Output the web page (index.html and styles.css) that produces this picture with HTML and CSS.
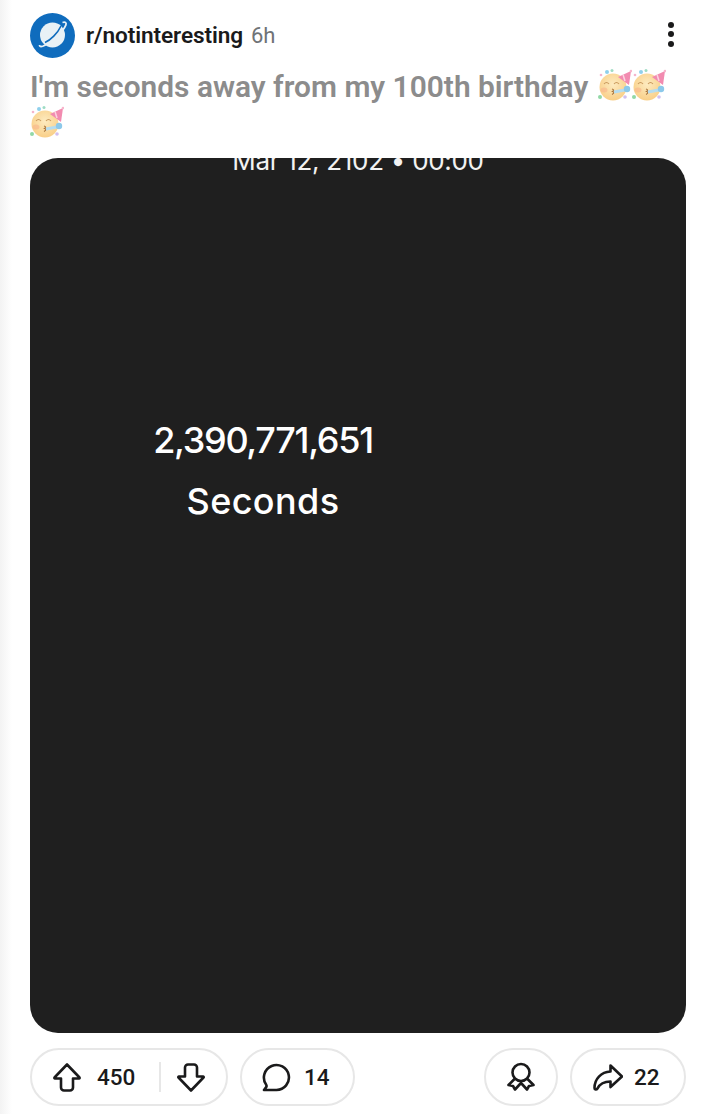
FILE: index.html
```html
<!DOCTYPE html>
<html lang="en">
<head>
<meta charset="utf-8">
<title>r/notinteresting</title>
<link rel="stylesheet" href="styles.css">
</head>
<body>
<svg class="defs" width="0" height="0" aria-hidden="true">
  <defs>
    <radialGradient id="face" cx="50%" cy="40%" r="60%">
      <stop offset="0" stop-color="#fdebc0"/>
      <stop offset="1" stop-color="#f9cf88"/>
    </radialGradient>
    <symbol id="party" viewBox="0 0 34 34">
      <circle cx="15" cy="19" r="13.5" fill="url(#face)"/>
      <path d="M20 9 33 3 31 17Z" fill="#f28bb0"/>
      <path d="M25 6.5 27 13" stroke="#fbd3e0" stroke-width="1.5" fill="none"/>
      <circle cx="33" cy="3" r="1.3" fill="#f7b6cc"/>
      <path d="M6 16q2.500-3 5 0M16 16q2.500-3 5 0" stroke="#c99a5e" stroke-width="1.1" fill="none"/>
      <ellipse cx="6" cy="22" rx="3.500" ry="2.500" fill="#f8b48c" opacity=".6"/>
      <path d="M14 21q3 1 .5 2.500q3 1 -.5 3" stroke="#a8743c" stroke-width="1.2" fill="none"/>
      <path d="M16 24 27 22" stroke="#b5dcef" stroke-width="3"/>
      <circle cx="29" cy="21" r="3.200" fill="#8cc9ea"/>
      <circle cx="9" cy="4" r="2" fill="#8fd0ec"/>
      <circle cx="14" cy="2.500" r="1.500" fill="#9edcc4"/>
      <circle cx="3" cy="7" r="1.300" fill="#f4b5cc"/>
      <circle cx="2" cy="29" r="2" fill="#92d8a6"/>
      <circle cx="27" cy="29" r="1.800" fill="#d0bff0"/>
    </symbol>
  </defs>
</svg>

<main class="post">
  <header class="post-head">
    <div class="avatar">
      <svg viewBox="0 0 45 45" width="45" height="45" aria-hidden="true">
        <circle cx="22.500" cy="22.500" r="22.500" fill="#0f6cbd"/>
        <circle cx="22.500" cy="22" r="12.500" fill="#e8f1f6"/>
        <path d="M32.500 9.500c3-.8 4.300.3 3.300 2.700-2.500 6-12.500 16.500-22.500 20.800-2.700 1-3.800.6-3.800-1" fill="none" stroke="#e8f1f6" stroke-width="1.800"/>
        <path d="M15 29.500c5.500-2.500 12.500-9 16-16.500" fill="none" stroke="#0f6cbd" stroke-width="1.600"/>
      </svg>
    </div>
    <div class="meta">
      <span class="sub">r/notinteresting</span>
      <span class="age">6h</span>
    </div>
    <div class="kebab" aria-label="More"><i></i><i></i><i></i></div>
  </header>

  <h1 class="title">
    <span class="title-text">I'm seconds away from my 100th birthday</span>
    <svg class="emoji" aria-hidden="true"><use href="#party"/></svg><svg class="emoji" aria-hidden="true"><use href="#party"/></svg>
    <svg class="emoji" aria-hidden="true"><use href="#party"/></svg>
  </h1>

  <section class="media">
    <div class="date">Mar 12, 2102 • 00:00</div>
    <div class="count">
      <div class="count-num">2,390,771,651</div>
      <div class="count-unit">Seconds</div>
    </div>
  </section>

  <footer class="actions">
    <div class="pill vote">
      <svg class="icon" viewBox="0 0 30 30" aria-hidden="true"><path d="M15 2.500 2.500 15.500a.6.6 0 0 0 .5 1H9V25.500a3 3 0 0 0 3 3h6a3 3 0 0 0 3-3v-9h6a.6.6 0 0 0 .5-1z"/></svg>
      <span class="num up-num">450</span>
      <span class="sep"></span>
      <svg class="icon down" viewBox="0 0 30 30" aria-hidden="true"><path d="M15 28.500 27.500 15.500a.6.6 0 0 0-.5-1H21V5.500a3 3 0 0 0-3-3h-6a3 3 0 0 0-3 3v9H3a.6.6 0 0 0-.5 1z"/></svg>
    </div>
    <div class="pill comments">
      <svg class="icon" viewBox="0 0 30 30" aria-hidden="true"><path d="M3 28h12.500a12.500 12.500 0 1 0-10.500-5.600c.8 1.200.8 2 0 3z"/></svg>
      <span class="num">14</span>
    </div>
    <div class="pill award">
      <svg class="icon" viewBox="0 0 30 30" aria-hidden="true"><circle cx="15" cy="10.500" r="8.500"/><path d="M8.500 17 2.500 23l4.500 1 2 3.500 6-6.500 6 6.500 2-3.500 4.500-1-6-6"/></svg>
    </div>
    <div class="pill share">
      <svg class="icon" viewBox="0 0 30 30" aria-hidden="true"><path d="M17.500 3.500 29 14.500 17.500 25V19.500c-6 0-10.500 2-13 7-1 1.500-3 1.500-3-.5C1.500 17 8 10 17.500 9.500z"/></svg>
      <span class="num">22</span>
    </div>
  </footer>
</main>
</body>
</html>
```

FILE: styles.css
```css
* { box-sizing: border-box; }

html, body { margin: 0; height: 100%; }

body {
  background: linear-gradient(to right, #f3f3f3 0, #fbfbfb 8px, #fff 12px);
  font-family: Roboto, "Liberation Sans", sans-serif;
  color: #1a1a1b;
  overflow: hidden;
}

.defs { position: absolute; }

.post {
  display: flex;
  flex-direction: column;
  height: 1114px;
  padding: 13px 30px 8px;
}

.post-head {
  display: flex;
  align-items: center;
  height: 45px;
}

.avatar { width: 45px; height: 45px; flex: none; }
.avatar svg { display: block; }

.meta {
  display: flex;
  align-items: baseline;
  gap: 8px;
  margin-left: 11px;
  flex: 1;
}

.sub { font-size: 22.6px; font-weight: 600; letter-spacing: -0.1px; }
.age { font-size: 22px; color: #6f7376; }

.kebab {
  display: flex;
  flex-direction: column;
  gap: 3.5px;
  margin: -3px 12px 0 0;
}
.kebab i { width: 6px; height: 6px; border-radius: 50%; background: #1a1a1b; }

.title {
  margin: 10px 0 0;
  font-size: 29.9px;
  font-weight: 600;
  line-height: 37px;
  color: #8c8c8c;
  height: 74px;
  width: 640px;
}

.title-text { margin-right: 2px; }

.emoji {
  width: 34px;
  height: 34px;
  vertical-align: -5px;
}

.media {
  display: flex;
  flex-direction: column;
  align-items: center;
  height: 875px;
  margin-top: 16px;
  border-radius: 28px;
  background: #1f1f1f;
  color: #fff;
  overflow: hidden;
  font-family: Inter, Lato, sans-serif;
}

.date {
  font-size: 26px;
  line-height: 32px;
  margin-top: -13px;
  color: #f2f2f2;
  letter-spacing: -0.3px;
}

.count {
  align-self: flex-start;
  width: 466px;
  margin-top: 240px;
  text-align: center;
}
.count-num { font-size: 36px; font-weight: 500; line-height: 46px; letter-spacing: -1.3px; }
.count-unit { font-size: 36px; font-weight: 500; line-height: 46px; margin-top: 15px; letter-spacing: 0.4px; }

.actions {
  display: flex;
  align-items: center;
  gap: 12px;
  margin-top: 15px;
}

.pill {
  display: flex;
  align-items: center;
  height: 58px;
  border: 2px solid #e7e7e7;
  border-radius: 29px;
  background: #fff;
}

.icon {
  width: 30px;
  height: 30px;
  flex: none;
  fill: none;
  stroke: #1a1a1b;
  stroke-width: 2.600;
  stroke-linejoin: round;
}

.num { font-size: 22.5px; font-weight: 500; }

.vote { width: 198px; padding-left: 20px; }
.up-num { margin-left: 15px; }
.sep { width: 2px; height: 30px; background: #e7e7e7; margin-left: 24px; }
.down { margin-left: 15px; }

.comments { width: 115px; padding-left: 19px; gap: 13px; }

.award { width: 74px; justify-content: center; margin-left: auto; }

.share { width: 116px; padding-left: 21px; gap: 11px; }
```
